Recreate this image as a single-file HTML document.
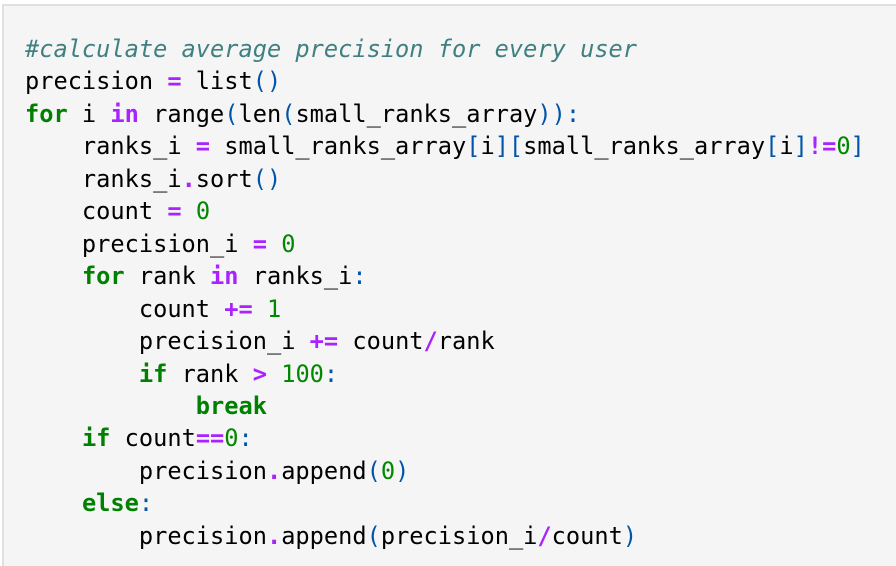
<!DOCTYPE html>
<html><head><style>
html,body{margin:0;padding:0;background:#fff;width:896px;height:566px;overflow:hidden}
.cell{position:absolute;left:2px;top:4px;width:894px;height:562px;background:#f5f5f5;border:2px solid #e0e0e0;border-right:none;border-bottom:none;box-sizing:border-box}
pre{position:absolute;left:25px;top:33px;margin:0;font-family:"DejaVu Sans Mono",monospace;font-size:23.65px;line-height:32.45px;color:#000}
.c{color:#408080;font-style:italic}
.k{color:#008000;font-weight:bold}
.o{color:#aa22ff;font-weight:bold}
.p{color:#0055aa}
.n{color:#008800}
</style></head><body>
<div class="cell"></div>
<pre><span class="c">#calculate average precision for every user</span>
precision <span class="o">=</span> list<span class="p">()</span>
<span class="k">for</span> i <span class="o">in</span> range<span class="p">(</span>len<span class="p">(</span>small_ranks_array<span class="p">)):</span>
    ranks_i <span class="o">=</span> small_ranks_array<span class="p">[</span>i<span class="p">][</span>small_ranks_array<span class="p">[</span>i<span class="p">]</span><span class="o">!=</span><span class="n">0</span><span class="p">]</span>
    ranks_i<span class="o">.</span>sort<span class="p">()</span>
    count <span class="o">=</span> <span class="n">0</span>
    precision_i <span class="o">=</span> <span class="n">0</span>
    <span class="k">for</span> rank <span class="o">in</span> ranks_i<span class="p">:</span>
        count <span class="o">+=</span> <span class="n">1</span>
        precision_i <span class="o">+=</span> count<span class="o">/</span>rank
        <span class="k">if</span> rank <span class="o">&gt;</span> <span class="n">100</span><span class="p">:</span>
            <span class="k">break</span>
    <span class="k">if</span> count<span class="o">==</span><span class="n">0</span><span class="p">:</span>
        precision<span class="o">.</span>append<span class="p">(</span><span class="n">0</span><span class="p">)</span>
    <span class="k">else</span><span class="p">:</span>
        precision<span class="o">.</span>append<span class="p">(</span>precision_i<span class="o">/</span>count<span class="p">)</span>
</pre>
</body></html>
